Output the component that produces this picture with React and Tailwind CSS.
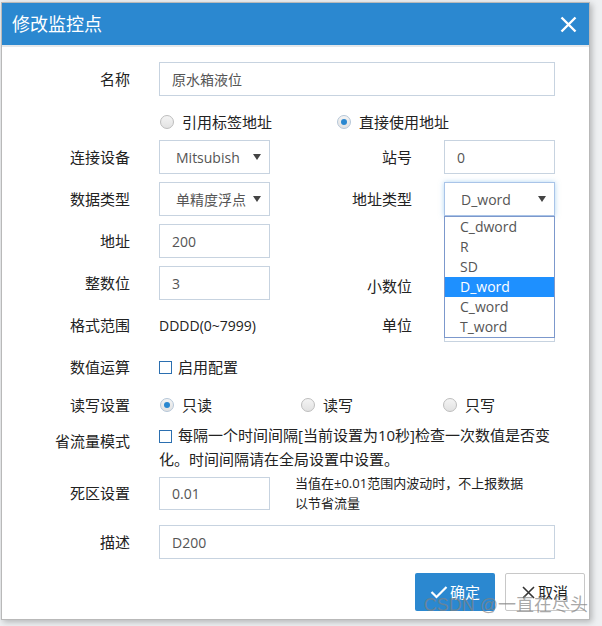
import { useState } from "react";

const font = { fontFamily: '"Open Sans", "Noto Sans CJK SC", sans-serif' };

function Label({ children, w = "w-[128px]" }) {
  return (
    <div className={`${w} shrink-0 text-right text-[15px] text-[#222]`}>
      {children}
    </div>
  );
}

function Input({ value, w = "w-[111px]", h = "h-[34px]" }) {
  return (
    <div
      className={`${w} ${h} flex items-center border border-[#c7d3e0] bg-white pl-[12px] text-[14px] text-[#555]`}
    >
      {value}
    </div>
  );
}

function Select({ value, w = "w-[111px]", focus }) {
  return (
    <div
      className={`${w} h-[34px] flex items-center justify-between border bg-white pl-[16px] pr-[8px] text-[14px] text-[#555] ${
        focus
          ? "border-[#a9c4e8] shadow-[0_0_5px_rgba(102,175,233,0.5)]"
          : "border-[#c7d3e0]"
      }`}
    >
      <span className="overflow-hidden whitespace-nowrap w-[74px]">{value}</span>
      <svg width="8" height="6" viewBox="0 0 8 6">
        <path d="M0 0 L8 0 L4 6 Z" fill="#444" />
      </svg>
    </div>
  );
}

function Radio({ checked, label }) {
  return (
    <div className="flex items-center gap-[8px] text-[15px] text-[#222]">
      <span
        className={`w-[14px] h-[14px] rounded-full border flex items-center justify-center bg-gradient-to-b from-[#f4f4f4] to-[#e2e2e2] ${
          checked ? "border-[#b5c6d8]" : "border-[#bdbdbd]"
        }`}
      >
        {checked && <span className="w-[6px] h-[6px] rounded-full bg-[#2b88d0]" />}
      </span>
      {label}
    </div>
  );
}

function Checkbox() {
  return <span className="w-[13px] h-[13px] border border-[#2b6fb0] bg-white shrink-0" />;
}

export default function App() {
  const [addrType] = useState("D_word");
  const options = ["C_dword", "R", "SD", "D_word", "C_word", "T_word"];

  return (
    <div className="w-[602px] h-[626px] bg-[#eef0f2] pt-[2px] pl-[1px]" style={font}>
      <div className="relative w-[589px] h-[618px] bg-white border border-[#b9b9b9] shadow-[2px_2px_6px_rgba(0,0,0,0.25)]">
        <div className="h-[44px] bg-[#2b88d0] flex items-center justify-between pl-[10px] pr-[12px] border-b-[2px] border-[#e4e7ea]">
          <span className="text-white text-[18px]">修改监控点</span>
          <svg width="17" height="17" viewBox="0 0 17 17">
            <path d="M1.5 1.5 L15.5 15.5 M15.5 1.5 L1.5 15.5" stroke="#fff" strokeWidth="2.4" />
          </svg>
        </div>

        <div className="flex flex-col">
          <div className="flex items-center h-[34px] mt-[15px]">
            <Label>名称</Label>
            <div className="ml-[29px]">
              <Input value="原水箱液位" w="w-[396px]" />
            </div>
          </div>

          <div className="flex items-center h-[28px] mt-[12px] pl-[158px]">
            <div className="w-[177px]">
              <Radio label="引用标签地址" />
            </div>
            <Radio checked label="直接使用地址" />
          </div>

          <div className="flex items-center h-[34px] mt-[4px]">
            <Label>连接设备</Label>
            <div className="ml-[29px]">
              <Select value="Mitsubish" />
            </div>
            <Label w="w-[142px]">站号</Label>
            <div className="ml-[32px]">
              <Input value="0" w="w-[111px]" />
            </div>
          </div>

          <div className="flex items-center h-[34px] mt-[8px]">
            <Label>数据类型</Label>
            <div className="ml-[29px]">
              <Select value="单精度浮点" />
            </div>
            <Label w="w-[142px]">地址类型</Label>
            <div className="ml-[32px] relative">
              <Select value={addrType} focus />
              <div className="absolute left-0 top-[34px] w-[111px] border border-[#7c98cc] bg-white z-10 text-[14px] text-[#555]">
                {options.map((o) => (
                  <div
                    key={o}
                    className={`h-[20px] leading-[20px] pl-[15px] ${
                      o === addrType ? "bg-[#1e90ff] text-white" : ""
                    }`}
                  >
                    {o}
                  </div>
                ))}
              </div>
            </div>
          </div>

          <div className="flex items-center h-[34px] mt-[8px]">
            <Label>地址</Label>
            <div className="ml-[29px]">
              <Input value="200" />
            </div>
          </div>

          <div className="flex items-center h-[34px] mt-[8px]">
            <Label>整数位</Label>
            <div className="ml-[29px]">
              <Input value="3" />
            </div>
            <Label w="w-[142px]">
              <span className="relative top-[3px]">小数位</span>
            </Label>
            <div className="ml-[32px]">
              <Input value="" />
            </div>
          </div>

          <div className="flex items-center h-[34px] mt-[8px]">
            <Label>格式范围</Label>
            <div className="ml-[29px] w-[111px] text-[14px] text-[#222] whitespace-nowrap">
              DDDD(0~7999)
            </div>
            <Label w="w-[142px]">单位</Label>
            <div className="ml-[32px]">
              <Input value="" />
            </div>
          </div>

          <div className="flex items-center h-[34px] mt-[8px]">
            <Label>数值运算</Label>
            <div className="ml-[29px] flex items-center gap-[6px] text-[15px] text-[#222]">
              <Checkbox />
              启用配置
            </div>
          </div>

          <div className="flex items-center h-[34px] mt-[4px]">
            <Label>读写设置</Label>
            <div className="ml-[29px] grid grid-cols-[142px_142px_142px]">
              <div className="pl-[1px]">
                <Radio checked label="只读" />
              </div>
              <div>
                <Radio label="读写" />
              </div>
              <div>
                <Radio label="只写" />
              </div>
            </div>
          </div>

          <div className="flex items-start mt-[1px]">
            <Label>
              <div className="pt-[7px]">省流量模式</div>
            </Label>
            <div className="ml-[29px] w-[410px] text-[15px] leading-[24px] text-[#222]">
              <span className="inline-block w-[13px] h-[13px] border border-[#2b6fb0] align-[-2px] mr-[6px]" />
              每隔一个时间间隔[当前设置为10秒]检查一次数值是否变
              <br />
              化。时间间隔请在全局设置中设置。
            </div>
          </div>

          <div className="flex items-center h-[32px] mt-[6px]">
            <Label>死区设置</Label>
            <div className="ml-[29px]">
              <Input value="0.01" h="h-[33px]" />
            </div>
            <div className="ml-[25px] text-[13px] leading-[20px] text-[#222] whitespace-nowrap">
              当值在±0.01范围内波动时，不上报数据
              <br />
              以节省流量
            </div>
          </div>

          <div className="flex items-center h-[34px] mt-[16px]">
            <Label>描述</Label>
            <div className="ml-[29px]">
              <Input value="D200" w="w-[396px]" />
            </div>
          </div>

          <div className="flex justify-end gap-[10px] mt-[14px] pr-[4px]">
            <div className="w-[80px] h-[38px] bg-[#2b88d0] rounded-[2px] flex items-center justify-center gap-[2px] text-white text-[15px]">
              <svg width="18" height="14" viewBox="0 0 18 14">
                <path d="M1.5 7 L6.5 12 L16.5 2" stroke="#fff" strokeWidth="2.2" fill="none" />
              </svg>
              确定
            </div>
            <div className="w-[80px] h-[38px] bg-white border border-[#c8c8c8] rounded-[2px] flex items-center justify-center gap-[3px] text-[#222] text-[15px]">
              <svg width="13" height="13" viewBox="0 0 13 13">
                <path d="M1 1 L12 12 M12 1 L1 12" stroke="#333" strokeWidth="1.6" />
              </svg>
              取消
            </div>
          </div>
        </div>

        <div
          className="absolute right-[1px] bottom-[0px] text-[18px] text-[rgba(130,130,130,0.7)] whitespace-nowrap"
          style={{ fontFamily: '"Liberation Sans", "Noto Sans CJK SC", sans-serif' }}
        >
          CSDN @一直在尽头
        </div>
      </div>
    </div>
  );
}
